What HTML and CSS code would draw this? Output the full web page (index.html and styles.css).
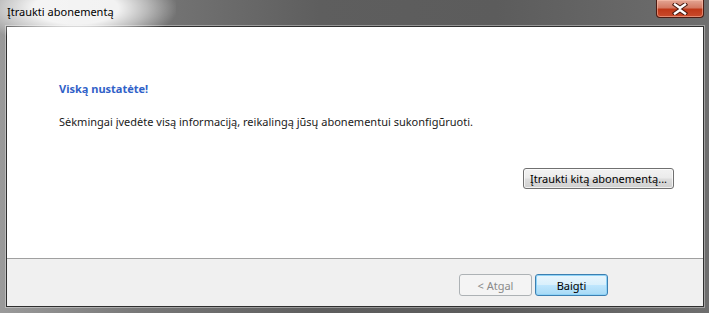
FILE: index.html
```html
<!DOCTYPE html>
<html lang="lt">
<head>
  <meta charset="UTF-8">
  <title>Įtraukti abonementą</title>
  <link rel="stylesheet" href="styles.css">
</head>
<body>
  <div class="window">
    <div class="title-bar">
      <span class="title-glow"></span>
      <span class="title">Įtraukti abonementą</span>
      <button class="close-btn" aria-label="Uždaryti">
        <svg width="18" height="12" viewBox="0 0 18 12">
          <path d="M4 1.5 L9 5 L14 1.5 M4 10.5 L9 7 L14 10.5" stroke="#4a1a10" stroke-width="4.4" fill="none" stroke-linecap="square"/>
          <path d="M4 1.5 L9 5 L14 1.5 M4 10.5 L9 7 L14 10.5" stroke="#fff" stroke-width="2.4" fill="none" stroke-linecap="square"/>
        </svg>
      </button>
    </div>

    <div class="client">
      <div class="content">
        <h2 class="heading">Viską nustatėte!</h2>
        <p class="message">Sėkmingai įvedėte visą informaciją, reikalingą jūsų abonementui sukonfigūruoti.</p>
        <div class="add-row">
          <button class="btn btn-add">Įtraukti kitą abonementą...</button>
        </div>
      </div>
      <div class="footer">
        <button class="btn btn-wide" disabled>&lt; Atgal</button>
        <button class="btn btn-wide btn-default">Baigti</button>
      </div>
    </div>
  </div>
</body>
</html>
```

FILE: styles.css
```css
* {
  box-sizing: border-box;
}

body {
  margin: 0;
  font-family: "Noto Sans", "Liberation Sans", sans-serif;
  font-size: 11px;
  background: #6a6a6a;
}

.window {
  width: 709px;
  height: 313px;
  display: flex;
  flex-direction: column;
  padding: 0 5px 6px 6px;
  background: linear-gradient(to right, #9a9a9a 0%, #777 20%, #5e5e5e 45%, #5c5c5c 70%, #6e6e6e 100%);
  position: relative;
  overflow: hidden;
}

.title-bar {
  height: 26px;
  display: flex;
  align-items: flex-start;
  position: relative;
}

.title-glow {
  position: absolute;
  left: -30px;
  top: -30px;
  width: 200px;
  height: 76px;
  background: radial-gradient(ellipse at center, rgba(255,255,255,0.9) 30%, rgba(255,255,255,0.5) 50%, rgba(255,255,255,0) 72%);
}

.title {
  position: relative;
  margin: 4px 0 0 1px;
  color: #000;
  font-size: 11px;
  line-height: 16px;
}

.close-btn {
  position: absolute;
  right: 0;
  top: 0;
  width: 48px;
  height: 18px;
  padding: 0;
  border: 1px solid #4c1b12;
  border-top: none;
  border-radius: 0 0 4px 4px;
  background: linear-gradient(to bottom, #e3a593 0%, #d47a63 45%, #bf3818 55%, #c94b2c 100%);
  box-shadow: inset 0 0 0 1px rgba(255,200,180,0.5);
  display: flex;
  align-items: center;
  justify-content: center;
}

.client {
  flex: 1;
  display: flex;
  flex-direction: column;
  background: #fff;
  border: 1px solid #2f2f2f;
  box-shadow: 0 0 0 1px rgba(255,255,255,0.35);
}

.content {
  flex: 1;
  padding: 54px 28px 0 52px;
}

.heading {
  margin: 0;
  font-size: 11px;
  font-weight: bold;
  color: #3061c8;
  line-height: 16px;
}

.message {
  margin: 17px 0 0;
  line-height: 16px;
  color: #1a1a1a;
}

.add-row {
  display: flex;
  justify-content: flex-end;
  margin-top: 38px;
}

.btn {
  height: 21px;
  padding: 0 6px;
  font-family: inherit;
  font-size: 11px;
  color: #000;
  white-space: nowrap;
  border: 1px solid #707070;
  border-radius: 3px;
  background: linear-gradient(to bottom, #f2f2f2 0%, #ebebeb 48%, #dddddd 52%, #cfcfcf 100%);
  box-shadow: inset 0 0 0 1px rgba(255,255,255,0.7);
}

.btn-add {
  width: 151px;
  padding: 0;
  margin-right: 1px;
}

.footer {
  height: 48px;
  border-top: 1px solid #a0a0a0;
  background: #f0f0f0;
  display: flex;
  justify-content: flex-end;
  align-items: flex-start;
  gap: 3px;
  padding: 15px 95px 0 0;
}

.btn-wide {
  width: 73px;
  height: 22px;
}

.btn[disabled] {
  color: #8a8a8a;
  border-color: #adb2b5;
  background: #f4f4f4;
  box-shadow: none;
}

.btn-default {
  border-color: #3c7fb1;
  background: linear-gradient(to bottom, #eaf6fd 0%, #d9f0fc 48%, #bee6fd 52%, #a7d9f5 100%);
  box-shadow: inset 0 0 0 1px #8fd3f7;
}
```
